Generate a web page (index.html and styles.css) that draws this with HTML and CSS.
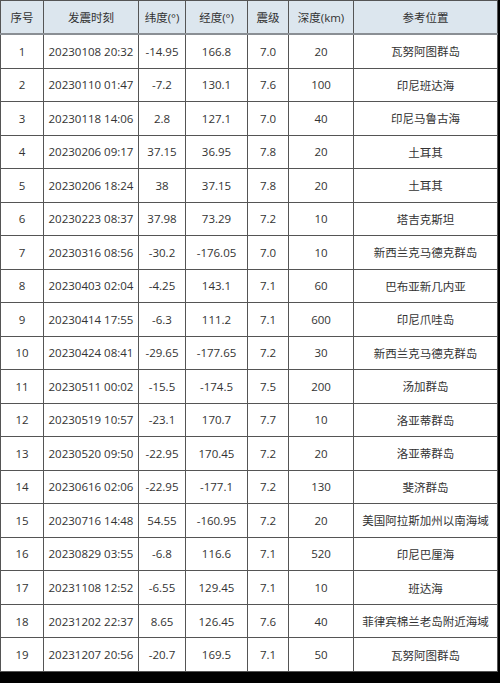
FILE: index.html
```html
<!DOCTYPE html>
<html lang="zh">
<head>
<meta charset="utf-8">
<link rel="stylesheet" href="styles.css">
</head>
<body>
<div class="sheet">
<table class="quakes">
<colgroup>
<col class="c-no"><col class="c-time"><col class="c-lat"><col class="c-lon"><col class="c-mag"><col class="c-depth"><col class="c-loc">
</colgroup>
<thead>
<tr><th>序号</th><th>发震时刻</th><th>纬度(°)</th><th>经度(°)</th><th>震级</th><th>深度(km)</th><th>参考位置</th></tr>
</thead>
<tbody>
<tr><td>1</td><td>20230108 20:32</td><td>-14.95</td><td>166.8</td><td>7.0</td><td>20</td><td>瓦努阿图群岛</td></tr>
<tr><td>2</td><td>20230110 01:47</td><td>-7.2</td><td>130.1</td><td>7.6</td><td>100</td><td>印尼班达海</td></tr>
<tr><td>3</td><td>20230118 14:06</td><td>2.8</td><td>127.1</td><td>7.0</td><td>40</td><td>印尼马鲁古海</td></tr>
<tr><td>4</td><td>20230206 09:17</td><td>37.15</td><td>36.95</td><td>7.8</td><td>20</td><td>土耳其</td></tr>
<tr><td>5</td><td>20230206 18:24</td><td>38</td><td>37.15</td><td>7.8</td><td>20</td><td>土耳其</td></tr>
<tr><td>6</td><td>20230223 08:37</td><td>37.98</td><td>73.29</td><td>7.2</td><td>10</td><td>塔吉克斯坦</td></tr>
<tr><td>7</td><td>20230316 08:56</td><td>-30.2</td><td>-176.05</td><td>7.0</td><td>10</td><td>新西兰克马德克群岛</td></tr>
<tr><td>8</td><td>20230403 02:04</td><td>-4.25</td><td>143.1</td><td>7.1</td><td>60</td><td>巴布亚新几内亚</td></tr>
<tr><td>9</td><td>20230414 17:55</td><td>-6.3</td><td>111.2</td><td>7.1</td><td>600</td><td>印尼爪哇岛</td></tr>
<tr><td>10</td><td>20230424 08:41</td><td>-29.65</td><td>-177.65</td><td>7.2</td><td>30</td><td>新西兰克马德克群岛</td></tr>
<tr><td>11</td><td>20230511 00:02</td><td>-15.5</td><td>-174.5</td><td>7.5</td><td>200</td><td>汤加群岛</td></tr>
<tr><td>12</td><td>20230519 10:57</td><td>-23.1</td><td>170.7</td><td>7.7</td><td>10</td><td>洛亚蒂群岛</td></tr>
<tr><td>13</td><td>20230520 09:50</td><td>-22.95</td><td>170.45</td><td>7.2</td><td>20</td><td>洛亚蒂群岛</td></tr>
<tr><td>14</td><td>20230616 02:06</td><td>-22.95</td><td>-177.1</td><td>7.2</td><td>130</td><td>斐济群岛</td></tr>
<tr><td>15</td><td>20230716 14:48</td><td>54.55</td><td>-160.95</td><td>7.2</td><td>20</td><td>美国阿拉斯加州以南海域</td></tr>
<tr><td>16</td><td>20230829 03:55</td><td>-6.8</td><td>116.6</td><td>7.1</td><td>520</td><td>印尼巴厘海</td></tr>
<tr><td>17</td><td>20231108 12:52</td><td>-6.55</td><td>129.45</td><td>7.1</td><td>10</td><td>班达海</td></tr>
<tr><td>18</td><td>20231202 22:37</td><td>8.65</td><td>126.45</td><td>7.6</td><td>40</td><td>菲律宾棉兰老岛附近海域</td></tr>
<tr><td>19</td><td>20231207 20:56</td><td>-20.7</td><td>169.5</td><td>7.1</td><td>50</td><td>瓦努阿图群岛</td></tr>
</tbody>
</table>
</div>
</body>
</html>
```
FILE: styles.css
```css
html, body {
  margin: 0;
  padding: 0;
  background: #000;
  width: 500px;
  height: 683px;
  overflow: hidden;
}
.sheet {
  width: 497px;
  height: 672px;
  background: #fff;
}
.quakes {
  width: 497px;
  height: 672px;
  border-collapse: collapse;
  table-layout: fixed;
  font-family: "Open Sans", "Noto Sans CJK SC", sans-serif;
  font-size: 11.5px;
  color: #333;
}
.c-no { width: 43px; }
.c-time { width: 95px; }
.c-lat { width: 47px; }
.c-lon { width: 62px; }
.c-mag { width: 41px; }
.c-depth { width: 65px; }
.c-loc { width: 144px; }
.quakes th, .quakes td {
  border: 1px solid #555;
  text-align: center;
  padding: 0;
  white-space: nowrap;
  overflow: hidden;
}
.quakes th {
  background: #dce6ee;
  font-weight: normal;
  height: 32px;
  border-bottom: 2px solid #8a8f94;
}
.quakes tbody td {
  height: 32.5px;
}
```
